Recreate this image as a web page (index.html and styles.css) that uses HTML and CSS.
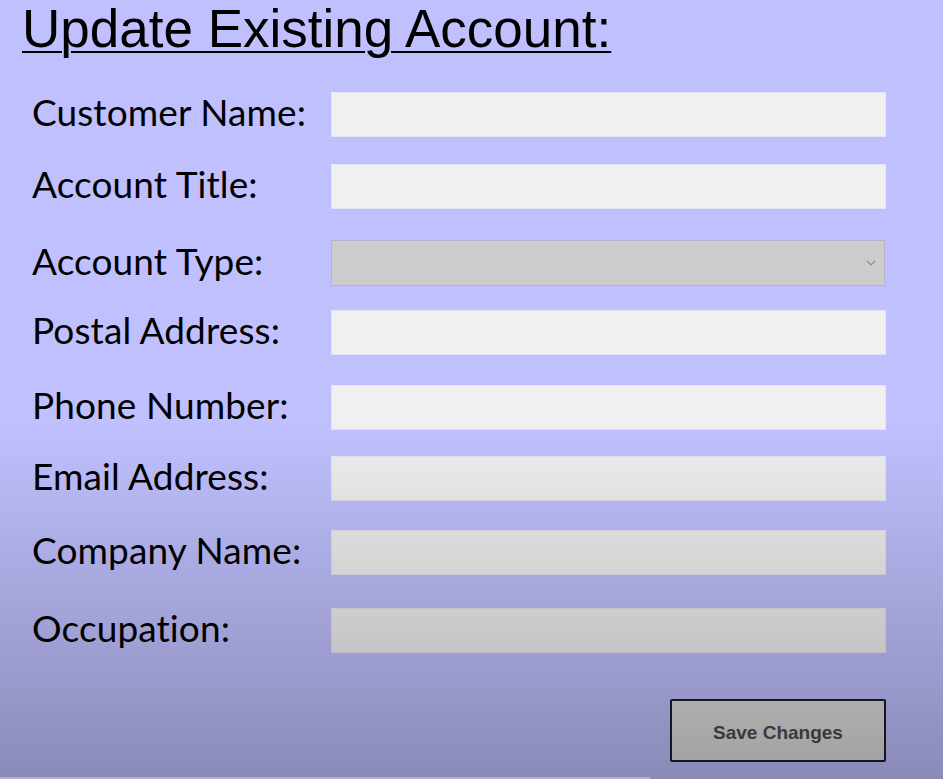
FILE: index.html
```html
<!DOCTYPE html>
<html lang="en">
<head>
<meta charset="utf-8">
<title>Update Existing Account</title>
<link rel="stylesheet" href="styles.css">
</head>
<body>
<main class="form">
  <h1 class="title">Update Existing Account:</h1>
  <div class="rows">
    <div class="row"><label class="label">Customer Name:</label><input class="field" type="text"></div>
    <div class="row"><label class="label">Account Title:</label><input class="field" type="text"></div>
    <div class="row"><label class="label">Account Type:</label>
      <div class="combo">
        <svg class="chev" width="10" height="6" viewBox="0 0 10 6"><path d="M1 1 L5 5 L9 1" fill="none" stroke="#8a8a8a" stroke-width="1.2"/></svg>
      </div>
    </div>
    <div class="row"><label class="label">Postal Address:</label><input class="field" type="text"></div>
    <div class="row"><label class="label">Phone Number:</label><input class="field" type="text"></div>
    <div class="row"><label class="label">Email Address:</label><input class="field" type="text"></div>
    <div class="row"><label class="label">Company Name:</label><input class="field" type="text"></div>
    <div class="row"><label class="label">Occupation:</label><input class="field" type="text"></div>
  </div>
  <div class="actions"><button class="save" type="button">Save Changes</button></div>
</main>
<div class="shade"></div>
<div class="progress"></div>
</body>
</html>
```
FILE: styles.css
```css
html, body {
  margin: 0;
  padding: 0;
}
body {
  width: 943px;
  height: 779px;
  overflow: hidden;
  background: #c0c0ff;
  position: relative;
  font-family: "Lato", "Open Sans", sans-serif;
}
.form {
  display: flex;
  flex-direction: column;
  padding-left: 22px;
  width: 864px;
}
.title {
  margin: 3px 0 0 0;
  font-family: "Liberation Sans", Arial, sans-serif;
  font-weight: normal;
  font-size: 53px;
  line-height: 52px;
  text-decoration: underline;
  text-decoration-thickness: 2px;
  text-underline-offset: 4px;
  color: #000;
}
.rows {
  display: flex;
  flex-direction: column;
  margin-top: 37px;
}
.row {
  display: flex;
  align-items: center;
  height: 45px;
}
.row:nth-child(2) { margin-top: 27px; }
.row:nth-child(3) { margin-top: 31px; height: 46px; }
.row:nth-child(4) { margin-top: 24px; }
.row:nth-child(5) { margin-top: 30px; }
.row:nth-child(6) { margin-top: 26px; }
.row:nth-child(7) { margin-top: 29px; }
.row:nth-child(8) { margin-top: 33px; }
.label {
  width: 309px;
  padding-left: 10px;
  padding-bottom: 5px;
  box-sizing: border-box;
  font-size: 37px;
  line-height: 40px;
  letter-spacing: 0.1px;
  color: #000;
  white-space: nowrap;
}
.field {
  box-sizing: border-box;
  width: 555px;
  height: 45px;
  margin: 0;
  padding: 0 6px;
  border: 1px solid #e4e4f6;
  background: #f0f0f0;
  outline: none;
}
.combo {
  box-sizing: border-box;
  width: 554px;
  height: 46px;
  border: 1px solid #b4b4cc;
  background: #cccccc;
  display: flex;
  align-items: center;
  justify-content: flex-end;
  padding-right: 8px;
}
.actions {
  display: flex;
  justify-content: flex-end;
  margin-top: 46px;
}
.save {
  box-sizing: border-box;
  width: 216px;
  height: 63px;
  margin: 0;
  padding: 4px 0 0 0;
  border: 2px solid #1c1c2e;
  border-radius: 2px;
  background: #dedede;
  color: #4c4c50;
  font-family: "Liberation Sans", Arial, sans-serif;
  font-weight: bold;
  font-size: 19px;
}
.shade {
  position: absolute;
  inset: 0;
  pointer-events: none;
  background: linear-gradient(to bottom, rgba(0,0,0,0) 0, rgba(0,0,0,0) 420px, rgba(0,0,0,0.28) 779px);
}
.progress {
  position: absolute;
  left: 0;
  bottom: 0;
  width: 650px;
  height: 2px;
  background: #b4b4cc;
  pointer-events: none;
}
```
